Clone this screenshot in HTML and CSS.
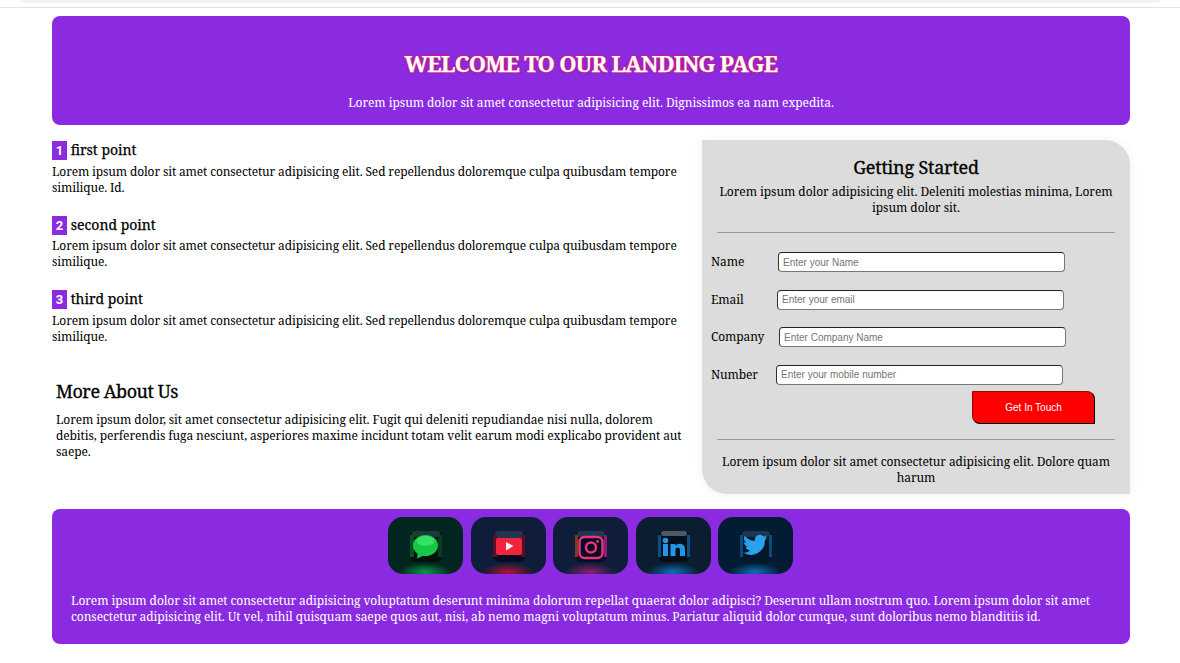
FILE: index.html
```html
<!DOCTYPE html>
<html lang="en">
<head>
<meta charset="utf-8">
<title>Landing Page</title>
<link rel="stylesheet" href="styles.css">
</head>
<body>
<div class="topbar"><div class="topbar-inner"></div></div>
<main class="page">
  <header class="hero">
    <h1>WELCOME TO OUR LANDING PAGE</h1>
    <p>Lorem ipsum dolor sit amet consectetur adipisicing elit. Dignissimos ea nam expedita.</p>
  </header>
  <section class="columns">
    <div class="left">
      <article class="point">
        <h3><span class="num">1</span> first point</h3>
        <p>Lorem ipsum dolor sit amet consectetur adipisicing elit. Sed repellendus doloremque culpa quibusdam tempore similique. Id.</p>
      </article>
      <article class="point">
        <h3><span class="num">2</span> second point</h3>
        <p>Lorem ipsum dolor sit amet consectetur adipisicing elit. Sed repellendus doloremque culpa quibusdam tempore similique.</p>
      </article>
      <article class="point">
        <h3><span class="num">3</span> third point</h3>
        <p>Lorem ipsum dolor sit amet consectetur adipisicing elit. Sed repellendus doloremque culpa quibusdam tempore similique.</p>
      </article>
      <div class="about">
        <h2>More About Us</h2>
        <p>Lorem ipsum dolor, sit amet consectetur adipisicing elit. Fugit qui deleniti repudiandae nisi nulla, dolorem debitis, perferendis fuga nesciunt, asperiores maxime incidunt totam velit earum modi explicabo provident aut saepe.</p>
      </div>
    </div>
    <aside class="card">
      <h2>Getting Started</h2>
      <p class="card-sub">Lorem ipsum dolor adipisicing elit. Deleniti molestias minima, Lorem ipsum dolor sit.</p>
      <hr class="rule rule-top">
      <form class="form">
        <div class="row row-name"><label for="n">Name</label><input id="n" type="text" placeholder="Enter your Name"></div>
        <div class="row row-email"><label for="e">Email</label><input id="e" type="text" placeholder="Enter your email"></div>
        <div class="row row-company"><label for="c">Company</label><input id="c" type="text" placeholder="Enter Company Name"></div>
        <div class="row row-number"><label for="m">Number</label><input id="m" type="text" placeholder="Enter your mobile number"></div>
        <div class="actions"><button type="button">Get In Touch</button></div>
      </form>
      <hr class="rule rule-bottom">
      <p class="card-foot">Lorem ipsum dolor sit amet consectetur adipisicing elit. Dolore quam harum</p>
    </aside>
  </section>
  <footer class="footer">
    <div class="icons">
      <svg class="icon" viewBox="0 0 75 57" role="img" aria-label="Messages">
        <defs>
          <radialGradient id="gm" cx=".5" cy=".5" r=".5"><stop offset="0" stop-color="#0b9a45"/><stop offset="1" stop-color="#0b9a45" stop-opacity="0"/></radialGradient>
        </defs>
        <rect width="75" height="57" fill="#00261f"/>
        <ellipse cx="37" cy="55" rx="26" ry="9" fill="url(#gm)"/>
        <g class="soft">
          <rect x="22" y="14" width="32" height="31" rx="6" fill="#04120f"/>
          <rect x="24" y="14" width="28" height="6" rx="3" fill="#1c3a38"/>
          <rect x="22" y="18" width="4" height="22" fill="#0a5020"/>
          <rect x="50" y="18" width="4" height="22" fill="#0a3a20"/>
          <ellipse cx="37.500" cy="28.500" rx="12.500" ry="10.500" fill="#16c845"/>
          <path d="M30 35l-1 6.500 8-3.500z" fill="#16c845"/>
          <ellipse cx="37.500" cy="24" rx="9" ry="5" fill="#35e068"/>
        </g>
      </svg>
      <svg class="icon" viewBox="0 0 75 57" role="img" aria-label="YouTube">
        <defs>
          <radialGradient id="gy" cx=".5" cy=".5" r=".5"><stop offset="0" stop-color="#b01432"/><stop offset="1" stop-color="#b01432" stop-opacity="0"/></radialGradient>
        </defs>
        <rect width="75" height="57" fill="#0f1d3a"/>
        <ellipse cx="37" cy="55" rx="26" ry="9" fill="url(#gy)"/>
        <g class="soft">
          <rect x="22" y="14" width="32" height="31" rx="6" fill="#070b20"/>
          <rect x="24" y="14" width="28" height="8" rx="3" fill="#22364f"/>
          <rect x="22" y="18" width="4" height="22" fill="#5a1024"/>
          <rect x="50" y="18" width="4" height="22" fill="#5a1024"/>
          <rect x="25" y="21" width="26" height="17" rx="2" fill="#f0243c"/>
          <path d="M35 25l7.500 4-7.500 4.500z" fill="#f5eef2"/>
        </g>
      </svg>
      <svg class="icon" viewBox="0 0 75 57" role="img" aria-label="Instagram">
        <defs>
          <radialGradient id="gi" cx=".5" cy=".5" r=".5"><stop offset="0" stop-color="#8a2070"/><stop offset="1" stop-color="#8a2070" stop-opacity="0"/></radialGradient>
        </defs>
        <rect width="75" height="57" fill="#0f1d3a"/>
        <ellipse cx="37" cy="55" rx="26" ry="9" fill="url(#gi)"/>
        <g class="soft">
          <rect x="22" y="14" width="32" height="31" rx="6" fill="#070b20"/>
          <rect x="24" y="14" width="28" height="6" rx="3" fill="#22364f"/>
          <rect x="22" y="18" width="3" height="22" fill="#7c3a1f"/>
          <rect x="51" y="18" width="3" height="22" fill="#8a1f7a"/>
          <rect x="26.500" y="20" width="23" height="21" rx="5" fill="none" stroke="#e6337f" stroke-width="2.500"/>
          <circle cx="38" cy="30.500" r="5" fill="none" stroke="#e6337f" stroke-width="2.500"/>
          <circle cx="44.500" cy="24.500" r="1.400" fill="#e6337f"/>
        </g>
      </svg>
      <svg class="icon" viewBox="0 0 75 57" role="img" aria-label="LinkedIn">
        <defs>
          <radialGradient id="gl" cx=".5" cy=".5" r=".5"><stop offset="0" stop-color="#0d70b8"/><stop offset="1" stop-color="#0d70b8" stop-opacity="0"/></radialGradient>
        </defs>
        <rect width="75" height="57" fill="#0a1e30"/>
        <ellipse cx="37" cy="55" rx="26" ry="9" fill="url(#gl)"/>
        <g class="soft">
          <rect x="22" y="14" width="32" height="31" rx="6" fill="#03101c"/>
          <rect x="25" y="14" width="26" height="5" rx="2.500" fill="#4a5a66"/>
          <rect x="22" y="18" width="3" height="22" fill="#0c4f85"/>
          <rect x="51" y="18" width="3" height="22" fill="#0c4f85"/>
          <circle cx="29.500" cy="23.500" r="2.800" fill="#2496e6"/>
          <rect x="27" y="27" width="5" height="12" fill="#2496e6"/>
          <path d="M34.500 27h4.700v1.800c1-1.400 2.600-2.100 4.500-2.100 3.600 0 5.300 2.200 5.300 6V39h-5v-5.500c0-1.900-.7-3-2.200-3-1.600 0-2.300 1.100-2.300 3V39h-5z" fill="#2496e6"/>
        </g>
      </svg>
      <svg class="icon" viewBox="0 0 75 57" role="img" aria-label="Twitter">
        <defs>
          <radialGradient id="gt" cx=".5" cy=".5" r=".5"><stop offset="0" stop-color="#0d70b8"/><stop offset="1" stop-color="#0d70b8" stop-opacity="0"/></radialGradient>
        </defs>
        <rect width="75" height="57" fill="#021c33"/>
        <ellipse cx="37" cy="55" rx="26" ry="9" fill="url(#gt)"/>
        <g class="soft">
          <rect x="22" y="14" width="32" height="31" rx="6" fill="#04182c"/>
          <rect x="24" y="14" width="28" height="6" rx="3" fill="#1a3650"/>
          <rect x="22" y="18" width="3" height="22" fill="#0b4a7a"/>
          <rect x="51" y="18" width="3" height="22" fill="#0b4a7a"/>
          <path d="M49.500 20.300c-.9.400-1.900.7-2.900.8 1-.6 1.800-1.600 2.200-2.800-1 .6-2 1-3.200 1.200a5 5 0 0 0-8.600 4.600c-4.200-.2-7.900-2.200-10.400-5.300-1.300 2.300-.6 5.200 1.600 6.700-.8 0-1.600-.2-2.300-.6 0 2.400 1.700 4.500 4 5-.7.200-1.500.2-2.300.1.700 2 2.500 3.400 4.700 3.500a10 10 0 0 1-7.400 2.100 14.300 14.300 0 0 0 22-12.700c1-.7 1.900-1.600 2.600-2.600z" fill="#2aa1ee"/>
        </g>
      </svg>
    </div>
    <p>Lorem ipsum dolor sit amet consectetur adipisicing voluptatum deserunt minima dolorum repellat quaerat dolor adipisci? Deserunt ullam nostrum quo. Lorem ipsum dolor sit amet consectetur adipisicing elit. Ut vel, nihil quisquam saepe quos aut, nisi, ab nemo magni voluptatum minus. Pariatur aliquid dolor cumque, sunt doloribus nemo blanditiis id.</p>
  </footer>
</main>
</body>
</html>
```
FILE: styles.css
```css
* { box-sizing: border-box; }
html, body { margin: 0; padding: 0; }
body {
  background: #fff;
  color: #000;
  font-family: "Noto Serif", "Droid Serif", "DejaVu Serif", serif;
  font-size: 12px;
  line-height: 16px;
  letter-spacing: -.115px;
}
.topbar { height: 8px; border-bottom: 1px solid #e3e3e3; padding: 0 20px; }
.topbar-inner { height: 3px; background: #f1f3f4; border-radius: 0 0 8px 8px; }
.page { padding: 8px 50px 0 52px; }
.hero {
  height: 109px;
  background: #8a2be2;
  border-radius: 8px;
  color: #fff;
  text-align: center;
  padding-top: 32px;
}
.hero h1 {
  margin: 0;
  font-size: 22px;
  line-height: 30px;
  font-weight: 700;
  letter-spacing: -.7px;
  -webkit-text-stroke: .25px #fff;
  text-shadow: 0 0 3px #e0145c, 0 0 3px #e0145c;
}
.hero p { margin: 17px 0 0; letter-spacing: -.06px; }
.columns { display: flex; gap: 16px; margin-top: 15px; }
.left { width: 634px; flex: none; }
.point { margin-bottom: 19px; }
.point h3 {
  margin: 0 0 3.500px;
  font-size: 14px;
  line-height: 19px;
  font-weight: 400;
  letter-spacing: 0;
  -webkit-text-stroke: .25px #000;
}
.point p { margin: 0; letter-spacing: -.135px; }
.num {
  display: inline-block;
  width: 15px;
  height: 19px;
  background: #8a2be2;
  color: #fff;
  font-family: "Roboto", sans-serif;
  font-size: 13px;
  font-weight: 700;
  text-align: center;
  -webkit-text-stroke: 0;
}
.about { padding: 15px 4px 0; }
.about h2 { margin: 0 0 9px; font-size: 18px; line-height: 24px; font-weight: 400; letter-spacing: -.45px; -webkit-text-stroke: .3px #000; }
.about p { margin: 0; letter-spacing: -.105px; }
.card {
  width: 428px;
  height: 354px;
  flex: none;
  background: #dcdcdc;
  border-radius: 0 25px 0 25px;
  box-shadow: 0 0 10px rgba(0,0,0,.06);
  padding-top: 16px;
  text-align: center;
}
.card h2 { margin: 0 0 5px; font-size: 18px; line-height: 23px; font-weight: 400; letter-spacing: -.2px; -webkit-text-stroke: .3px #000; }
.card-sub { margin: 0 auto; width: 400px; letter-spacing: -.06px; }
.rule { margin: 0 15px; border: 0; border-top: 1px solid #999; height: 0; }
.rule-top { margin-top: 15.500px; }
.rule-bottom { margin-top: 15px; }
.form { padding: 19.500px 0 0 9px; text-align: left; }
.row { display: flex; align-items: center; height: 20px; margin-bottom: 17.500px; }
.row label { flex: none; }
.row-name label { width: 67px; }
.row-email label { width: 66px; }
.row-company label { width: 68px; }
.row-number label { width: 65px; }
.row input {
  width: 287px;
  height: 20px;
  flex: none;
  border: 1px solid;
  border-color: #222 #777 #777 #333;
  border-radius: 4px;
  background: #fff;
  padding: 0 4px;
  font-family: "Liberation Sans", Arial, sans-serif;
  font-size: 10px;
}
.row input::placeholder { color: #757575; }
.actions { display: flex; justify-content: flex-end; margin-top: -11.500px; padding-right: 35px; }
.actions button {
  width: 123px;
  height: 33px;
  background: #f00;
  color: #fff;
  border: 1px solid;
  border-color: #a00 #000 #000 #900;
  border-radius: 0 8px 0 8px;
  font-family: "Liberation Sans", Arial, sans-serif;
  font-size: 10px;
  padding: 0;
}
.card-foot { margin: 14px auto 0; width: 400px; }
.footer {
  margin-top: 15px;
  height: 135px;
  background: #8a2be2;
  border-radius: 8px;
  color: #fff;
  padding-top: 8px;
}
.icons { display: flex; justify-content: center; gap: 7.500px; margin-right: 1px; }
.icon { width: 75px; height: 57px; border-radius: 15px; display: block; }
.soft { filter: blur(.45px); }
.footer p { margin: 19px 19px 0; letter-spacing: -.085px; }
```
